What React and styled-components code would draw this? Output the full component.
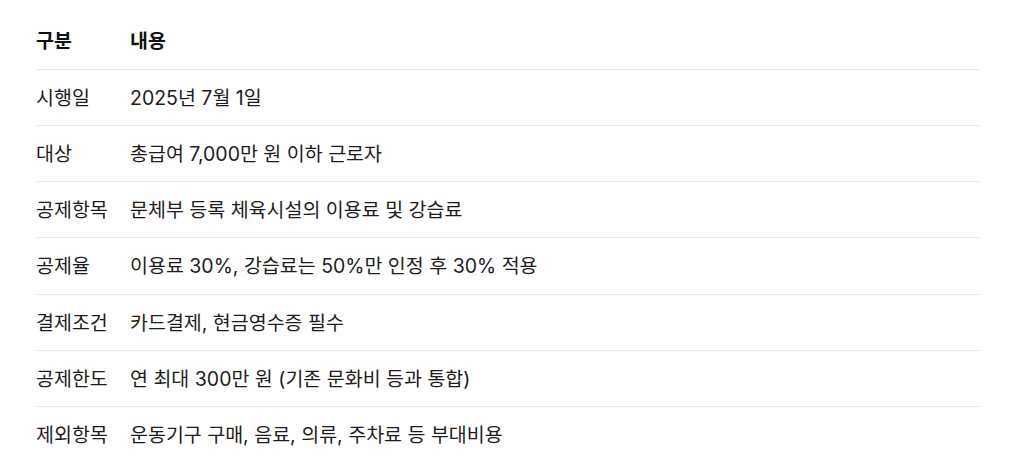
import React from "react";
import styled, { createGlobalStyle } from "styled-components";

const Global = createGlobalStyle`
  html, body { margin: 0; padding: 0; background: #ffffff; }
  body {
    font-family: Inter, "Noto Sans CJK KR", "Noto Sans", sans-serif;
    color: #1f1f1f;
    -webkit-font-smoothing: antialiased;
  }
`;

const Wrap = styled.div`
  padding: 13px 44px 0 36px;
`;

const Table = styled.table`
  width: 100%;
  border-collapse: collapse;
  font-size: 19.5px;
  line-height: 26px;
`;

const Th = styled.th`
  text-align: left;
  font-weight: 700;
  color: #111;
  padding: 15px 0 14.5px;
  border-bottom: 1px solid #e3e3e3;
  width: ${(p) => (p.$first ? "94px" : "auto")};
`;

const Td = styled.td`
  text-align: left;
  font-weight: 400;
  color: #1c1c1c;
  padding: 15px 0 14.33px;
  white-space: nowrap;
  tr:not(:last-child) > & {
    border-bottom: 1px solid #ececec;
  }
`;

const rows = [
  ["시행일", "2025년 7월 1일"],
  ["대상", "총급여 7,000만 원 이하 근로자"],
  ["공제항목", "문체부 등록 체육시설의 이용료 및 강습료"],
  ["공제율", "이용료 30%, 강습료는 50%만 인정 후 30% 적용"],
  ["결제조건", "카드결제, 현금영수증 필수"],
  ["공제한도", "연 최대 300만 원 (기존 문화비 등과 통합)"],
  ["제외항목", "운동기구 구매, 음료, 의류, 주차료 등 부대비용"],
];

export default function App() {
  return (
    <>
      <Global />
      <Wrap>
        <Table>
          <thead>
            <tr>
              <Th $first>구분</Th>
              <Th>내용</Th>
            </tr>
          </thead>
          <tbody>
            {rows.map(([k, v]) => (
              <tr key={k}>
                <Td>{k}</Td>
                <Td>{v}</Td>
              </tr>
            ))}
          </tbody>
        </Table>
      </Wrap>
    </>
  );
}
